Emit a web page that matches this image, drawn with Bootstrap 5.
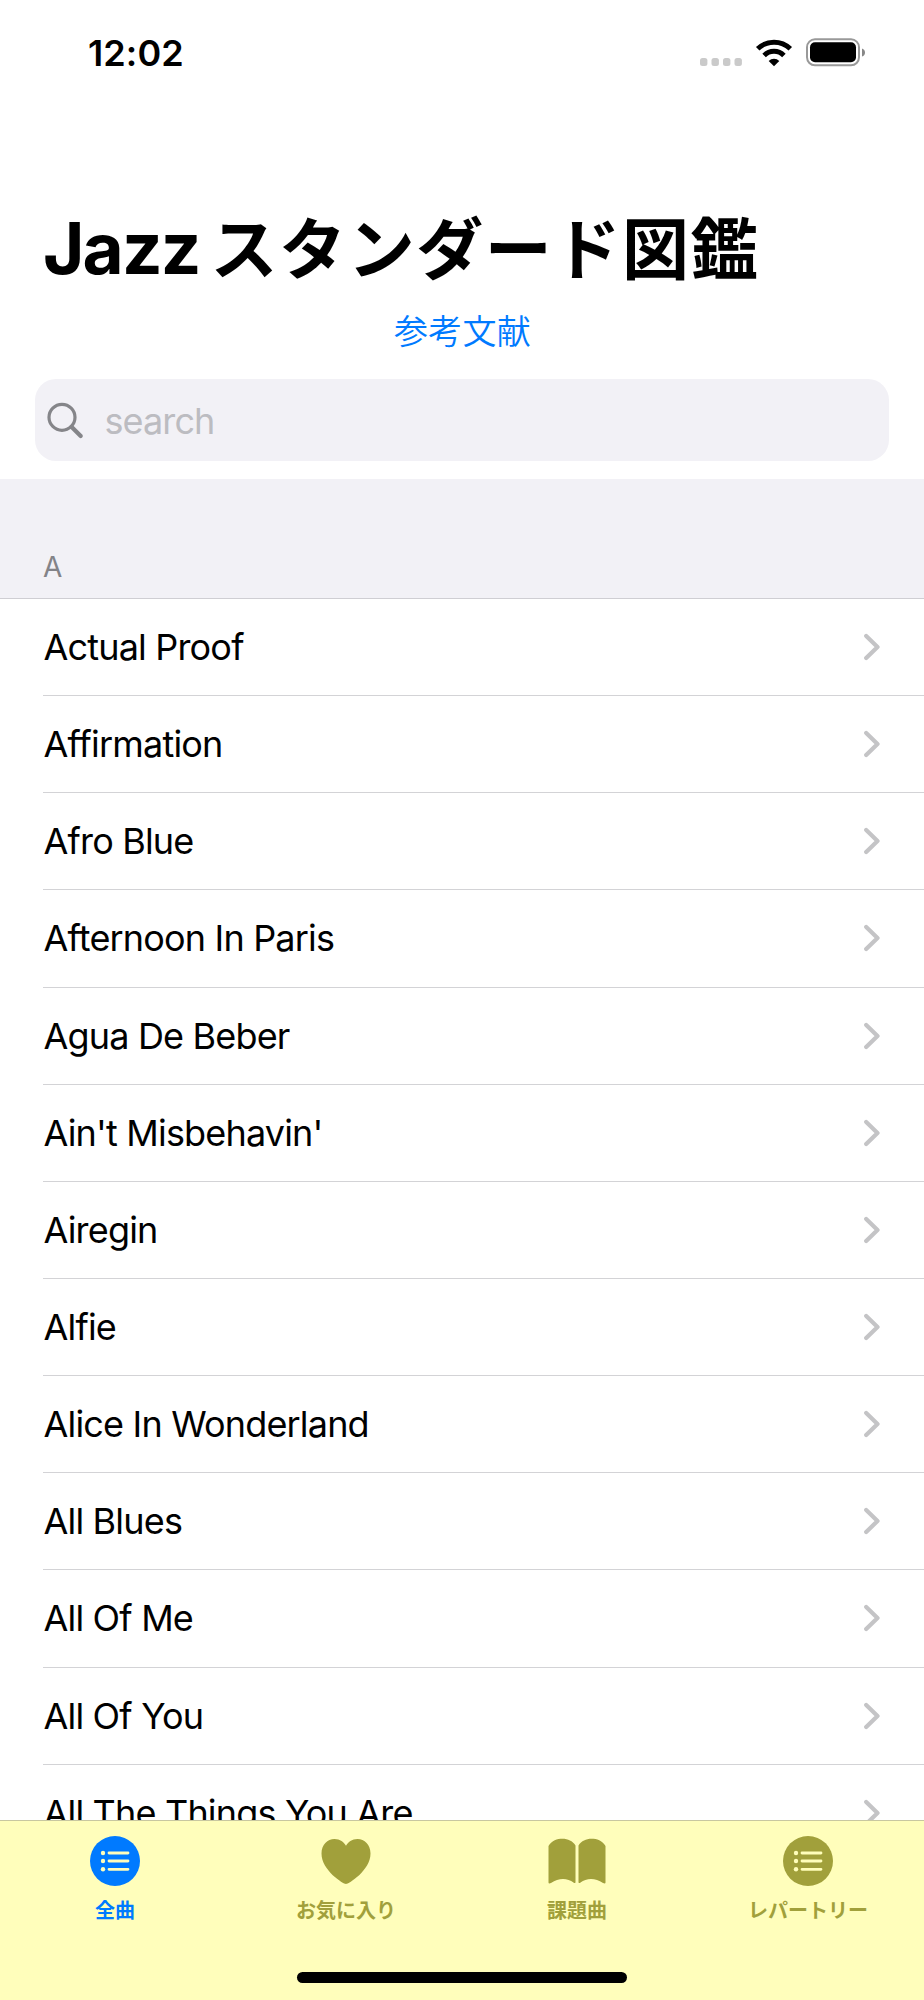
<!DOCTYPE html>
<html lang="ja">
<head>
<meta charset="utf-8">
<meta name="viewport" content="width=device-width, initial-scale=1">
<title>Jazzスタンダード図鑑</title>
<link rel="stylesheet" href="https://cdn.jsdelivr.net/npm/bootstrap@5.3.0/dist/css/bootstrap.min.css">
<style>
body{font-family:Inter,"Noto Sans CJK JP",sans-serif;color:#000;background:#fff}
.screen{width:924px;height:2000px}
.status{height:106px;padding:0 59px 0 88px}
.clock{font-size:36px;font-weight:600;letter-spacing:.1px;line-height:1}
.title{height:194px;padding:0 0 0 43px}
.title h1{font-size:71px;font-weight:700;letter-spacing:-1.9px;line-height:100px;margin:0;white-space:nowrap}
.title h1 span{font-size:67px;letter-spacing:1.6px;margin-left:11px}
.reflink{height:79px;font-size:34px;font-weight:350;line-height:64px;color:#007aff;letter-spacing:.3px;padding-left:1px}
.searchbox{height:82px;margin:0 35px 18px;border-radius:21px;background:#f2f1f6;padding-left:12px}
.searchbox input,.searchbox input:focus{background:transparent;font-size:36px;line-height:44px;letter-spacing:-.9px;padding:2px 0 0;margin-left:20.5px}
.searchbox input::placeholder{color:#bcbcc1;opacity:1}
.section-title{height:120px;background:#f2f1f6;border-bottom:1px solid #cfced3;color:#838388;font-size:28px;line-height:28px;padding:0 0 17px 43px}
.songs{height:1221px}
.song{height:97.15px;margin-left:43px;padding:0 44px 0 .5px;border-bottom:1px solid #d3d3d6;font-size:36px;letter-spacing:-.82px;white-space:nowrap}
.tabs{height:180px;background:#fffebb;border-top:1px solid #c8c7a0;color:#a1a03b}
.tab-item{font-size:20px;font-weight:700;line-height:24px;color:inherit;padding:15px 1px 0 0}
.tab-item svg{display:block;margin-bottom:13px}
.tab-item.current{color:#007aff}
.homebar{width:330px;height:11px;border-radius:6px;background:#000;margin-bottom:17px}
</style>
</head>
<body>
<div class="screen d-flex flex-column overflow-hidden">
  <header class="status d-flex align-items-center justify-content-between flex-shrink-0">
    <div class="clock">12:02</div>
    <svg width="165" height="30" viewBox="0 0 165 30">
      <g fill="#cacaca"><rect x="0" y="20" width="7.4" height="8" rx="2.5"/><rect x="11.5" y="20" width="7.4" height="8" rx="2.5"/><rect x="23" y="20" width="7.4" height="8" rx="2.5"/><rect x="34.5" y="20" width="7.4" height="8" rx="2.5"/></g>
      <g fill="none" stroke="#000" stroke-width="5"><path d="M57.700 10.800a23.500 23.500 0 0 1 32.600 0"/><path d="M64.100 17.400a14 14 0 0 1 19.800 0"/></g>
      <path d="M74 28.200l-5.300-5.300a7.600 7.600 0 0 1 10.600 0z"/>
      <rect x="107" y="1.300" width="52" height="26" rx="8" fill="none" stroke="#999" stroke-width="2"/>
      <rect x="110" y="4.300" width="46" height="20" rx="5"/>
      <path d="M162 10.500q3 1 3 4t-3 4z" fill="#888"/>
    </svg>
  </header>
  <div class="title d-flex align-items-end flex-shrink-0"><h1>Jazz<span>スタンダード図鑑</span></h1></div>
  <a class="reflink text-center text-decoration-none flex-shrink-0" href="#">参考文献</a>
  <div class="searchbox d-flex align-items-center flex-shrink-0">
    <svg class="flex-shrink-0" width="37" height="38" viewBox="0 0 37 38" fill="none" stroke="#858589" stroke-linecap="round"><circle cx="15" cy="16.300" r="13" stroke-width="3.200"/><path d="M24.700 26l9 9" stroke-width="4.200"/></svg>
    <input class="form-control border-0 shadow-none" type="text" placeholder="search">
  </div>
  <div class="section-title d-flex align-items-end flex-shrink-0">A</div>
  <main class="songs overflow-hidden flex-shrink-0" id="songs"></main>
  <nav class="tabs d-flex flex-column justify-content-between flex-shrink-0">
    <div class="row g-0">
      <a class="tab-item current col-3 d-flex flex-column align-items-center text-decoration-none" href="#">
        <svg width="60" height="50" viewBox="0 0 60 50"><circle cx="30" cy="25" r="25" fill="currentColor"/><g fill="#fffebb"><circle cx="18" cy="17" r="2.200"/><circle cx="18" cy="25" r="2.200"/><circle cx="18" cy="33.300" r="2.200"/></g><path d="M24 17h19M24 25h19M24 33.300h19" stroke="#fffebb" stroke-width="2.800" stroke-linecap="round"/></svg>
        全曲</a>
      <a class="tab-item col-3 d-flex flex-column align-items-center text-decoration-none" href="#">
        <svg width="60" height="50" viewBox="0 0 60 50"><path fill="currentColor" d="M30 48C27.500 48 5.500 34.500 5.500 17.500C5.500 8.500 11.500 3 18.500 3C24 3 28 6 30 9.800C32 6 36 3 41.500 3C48.500 3 54.500 8.500 54.500 17.500C54.500 34.500 32.500 48 30 48Z"/></svg>
        お気に入り</a>
      <a class="tab-item col-3 d-flex flex-column align-items-center text-decoration-none" href="#">
        <svg width="60" height="50" viewBox="0 0 60 50" fill="currentColor"><path d="M1.500 10C5 4.500 10 2.800 15.500 2.800S25.500 5 28.500 9.500V46.500Q27.500 47.500 26.500 46.500Q22 43 16 43Q10 43 4 47Q1.500 48 1.500 46.500Z"/><path d="M58.500 10C55 4.500 50 2.800 44.500 2.800S34.500 5 31.500 9.500V46.500Q32.500 47.500 33.500 46.500Q38 43 44 43Q50 43 56 47Q58.500 48 58.500 46.500Z"/></svg>
        課題曲</a>
      <a class="tab-item col-3 d-flex flex-column align-items-center text-decoration-none" href="#">
        <svg width="60" height="50" viewBox="0 0 60 50"><circle cx="30" cy="25" r="25" fill="currentColor"/><g fill="#fffebb"><circle cx="18" cy="17" r="2.200"/><circle cx="18" cy="25" r="2.200"/><circle cx="18" cy="33.300" r="2.200"/></g><path d="M24 17h19M24 25h19M24 33.300h19" stroke="#fffebb" stroke-width="2.800" stroke-linecap="round"/></svg>
        レパートリー</a>
    </div>
    <div class="homebar mx-auto"></div>
  </nav>
</div>
<script>
const songs = ["Actual Proof","Affirmation","Afro Blue","Afternoon In Paris","Agua De Beber","Ain't Misbehavin'","Airegin","Alfie","Alice In Wonderland","All Blues","All Of Me","All Of You","All The Things You Are"];
document.getElementById("songs").innerHTML = songs.map(s =>
  `<div class="song d-flex align-items-center justify-content-between"><span>${s}</span><svg width="16" height="28" viewBox="0 0 16 28" fill="none" stroke="#c4c4c6" stroke-width="4.200" stroke-linecap="round" stroke-linejoin="round"><path d="M2.200 3l11.300 11L2.200 25"/></svg></div>`).join("");
</script>
<script src="https://cdn.jsdelivr.net/npm/bootstrap@5.3.0/dist/js/bootstrap.bundle.min.js"></script>
</body>
</html>
